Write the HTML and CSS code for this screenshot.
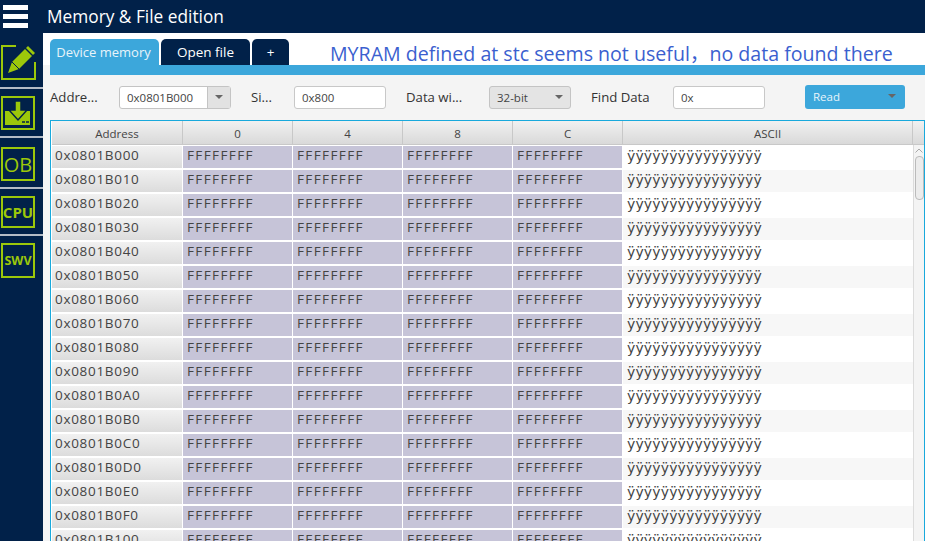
FILE: index.html
```html
<!DOCTYPE html>
<html lang="en">
<head>
    <meta charset="UTF-8">
    <title>Memory &amp; File edition</title>
    <link rel="stylesheet" href="styles.css">
</head>
<body>
    <header class="title-bar">
        <div class="menu-button"><span></span><span></span><span></span></div>
        <h1>Memory &amp; File edition</h1>
    </header>

    <div class="app">
        <nav class="sidebar">
            <div class="side-item item-edit">
                <svg class="side-icon" width="36" height="36" viewBox="0 0 36 36">
                    <path d="M15 1H1V34H34V17" fill="none" stroke="#9cc80a" stroke-width="2"/>
                    <path d="M7 28l4-11L24 4l7 7L18 24z" fill="#9cc80a"/>
                    <path d="M27 1l7 7-2 2-7-7z" fill="#9cc80a"/>
                    <path d="M11 17l7 7" stroke="#012149" stroke-width="1"/>
                </svg>
            </div>
            <div class="side-item item-load">
                <svg class="side-icon" width="34" height="34" viewBox="0 0 34 34">
                    <rect x="1" y="1" width="32" height="32" fill="none" stroke="#9cc80a" stroke-width="2"/>
                    <path d="M4 15h6l7 7 7-7h5v14H4z" fill="#9cc80a"/>
                    <path d="M14 5h6v9h6l-9 10-9-10h6z" fill="#9cc80a" stroke="#012149" stroke-width="1.500"/>
                    <path d="M21 26h3M25 26h3" stroke="#012149" stroke-width="1.500"/>
                </svg>
            </div>
            <div class="side-item item-ob"><div class="side-box ob">OB</div></div>
            <div class="side-item item-cpu"><div class="side-box bold">CPU</div></div>
            <div class="side-item item-swv"><div class="side-box bold small">SWV</div></div>
        </nav>

        <main class="content">
            <div class="tabs">
                <div class="tab active">Device memory</div>
                <div class="tab open">Open file</div>
                <div class="tab plus">+</div>
                <div class="note">MYRAM defined at stc seems not useful，no data found there</div>
            </div>
            <div class="tab-line"></div>

            <div class="toolbar">
                <label class="lbl lbl-addr">Addre...</label>
                <div class="combo">
                    <span class="combo-text">0x0801B000</span>
                    <span class="combo-arrow"><i class="arrow"></i></span>
                </div>
                <label class="lbl lbl-size">Si...</label>
                <div class="field field-size">0x800</div>
                <label class="lbl lbl-width">Data wi...</label>
                <div class="select">32-bit<i class="arrow"></i></div>
                <label class="lbl lbl-find">Find Data</label>
                <div class="field field-find">0x</div>
                <div class="read-button">Read<i class="arrow"></i></div>
            </div>

            <div class="table">
                <div class="head-row">
                    <div class="th">Address</div>
                    <div class="th">0</div>
                    <div class="th">4</div>
                    <div class="th">8</div>
                    <div class="th">C</div>
                    <div class="th">ASCII</div>
                    <div class="th"></div>
                </div>
                <div class="table-body">
                    <div class="rows">
                        <div class="row"><div class="addr">0x0801B000</div><div class="val">FFFFFFFF</div><div class="val">FFFFFFFF</div><div class="val">FFFFFFFF</div><div class="val">FFFFFFFF</div><div class="ascii">ÿÿÿÿÿÿÿÿÿÿÿÿÿÿÿÿ</div></div>
                        <div class="row"><div class="addr">0x0801B010</div><div class="val">FFFFFFFF</div><div class="val">FFFFFFFF</div><div class="val">FFFFFFFF</div><div class="val">FFFFFFFF</div><div class="ascii">ÿÿÿÿÿÿÿÿÿÿÿÿÿÿÿÿ</div></div>
                        <div class="row"><div class="addr">0x0801B020</div><div class="val">FFFFFFFF</div><div class="val">FFFFFFFF</div><div class="val">FFFFFFFF</div><div class="val">FFFFFFFF</div><div class="ascii">ÿÿÿÿÿÿÿÿÿÿÿÿÿÿÿÿ</div></div>
                        <div class="row"><div class="addr">0x0801B030</div><div class="val">FFFFFFFF</div><div class="val">FFFFFFFF</div><div class="val">FFFFFFFF</div><div class="val">FFFFFFFF</div><div class="ascii">ÿÿÿÿÿÿÿÿÿÿÿÿÿÿÿÿ</div></div>
                        <div class="row"><div class="addr">0x0801B040</div><div class="val">FFFFFFFF</div><div class="val">FFFFFFFF</div><div class="val">FFFFFFFF</div><div class="val">FFFFFFFF</div><div class="ascii">ÿÿÿÿÿÿÿÿÿÿÿÿÿÿÿÿ</div></div>
                        <div class="row"><div class="addr">0x0801B050</div><div class="val">FFFFFFFF</div><div class="val">FFFFFFFF</div><div class="val">FFFFFFFF</div><div class="val">FFFFFFFF</div><div class="ascii">ÿÿÿÿÿÿÿÿÿÿÿÿÿÿÿÿ</div></div>
                        <div class="row"><div class="addr">0x0801B060</div><div class="val">FFFFFFFF</div><div class="val">FFFFFFFF</div><div class="val">FFFFFFFF</div><div class="val">FFFFFFFF</div><div class="ascii">ÿÿÿÿÿÿÿÿÿÿÿÿÿÿÿÿ</div></div>
                        <div class="row"><div class="addr">0x0801B070</div><div class="val">FFFFFFFF</div><div class="val">FFFFFFFF</div><div class="val">FFFFFFFF</div><div class="val">FFFFFFFF</div><div class="ascii">ÿÿÿÿÿÿÿÿÿÿÿÿÿÿÿÿ</div></div>
                        <div class="row"><div class="addr">0x0801B080</div><div class="val">FFFFFFFF</div><div class="val">FFFFFFFF</div><div class="val">FFFFFFFF</div><div class="val">FFFFFFFF</div><div class="ascii">ÿÿÿÿÿÿÿÿÿÿÿÿÿÿÿÿ</div></div>
                        <div class="row"><div class="addr">0x0801B090</div><div class="val">FFFFFFFF</div><div class="val">FFFFFFFF</div><div class="val">FFFFFFFF</div><div class="val">FFFFFFFF</div><div class="ascii">ÿÿÿÿÿÿÿÿÿÿÿÿÿÿÿÿ</div></div>
                        <div class="row"><div class="addr">0x0801B0A0</div><div class="val">FFFFFFFF</div><div class="val">FFFFFFFF</div><div class="val">FFFFFFFF</div><div class="val">FFFFFFFF</div><div class="ascii">ÿÿÿÿÿÿÿÿÿÿÿÿÿÿÿÿ</div></div>
                        <div class="row"><div class="addr">0x0801B0B0</div><div class="val">FFFFFFFF</div><div class="val">FFFFFFFF</div><div class="val">FFFFFFFF</div><div class="val">FFFFFFFF</div><div class="ascii">ÿÿÿÿÿÿÿÿÿÿÿÿÿÿÿÿ</div></div>
                        <div class="row"><div class="addr">0x0801B0C0</div><div class="val">FFFFFFFF</div><div class="val">FFFFFFFF</div><div class="val">FFFFFFFF</div><div class="val">FFFFFFFF</div><div class="ascii">ÿÿÿÿÿÿÿÿÿÿÿÿÿÿÿÿ</div></div>
                        <div class="row"><div class="addr">0x0801B0D0</div><div class="val">FFFFFFFF</div><div class="val">FFFFFFFF</div><div class="val">FFFFFFFF</div><div class="val">FFFFFFFF</div><div class="ascii">ÿÿÿÿÿÿÿÿÿÿÿÿÿÿÿÿ</div></div>
                        <div class="row"><div class="addr">0x0801B0E0</div><div class="val">FFFFFFFF</div><div class="val">FFFFFFFF</div><div class="val">FFFFFFFF</div><div class="val">FFFFFFFF</div><div class="ascii">ÿÿÿÿÿÿÿÿÿÿÿÿÿÿÿÿ</div></div>
                        <div class="row"><div class="addr">0x0801B0F0</div><div class="val">FFFFFFFF</div><div class="val">FFFFFFFF</div><div class="val">FFFFFFFF</div><div class="val">FFFFFFFF</div><div class="ascii">ÿÿÿÿÿÿÿÿÿÿÿÿÿÿÿÿ</div></div>
                        <div class="row"><div class="addr">0x0801B100</div><div class="val">FFFFFFFF</div><div class="val">FFFFFFFF</div><div class="val">FFFFFFFF</div><div class="val">FFFFFFFF</div><div class="ascii">ÿÿÿÿÿÿÿÿÿÿÿÿÿÿÿÿ</div></div>
                    </div>
                    <div class="scrollbar">
                        <svg class="scroll-up" width="8" height="5" viewBox="0 0 8 5"><path d="M0.500 4.500L4 1l3.500 3.500" fill="none" stroke="#a8a8a8" stroke-width="1"/></svg>
                        <div class="thumb"></div>
                    </div>
                </div>
            </div>
        </main>
    </div>
</body>
</html>
```

FILE: styles.css
```css
html, body {
    height: 100%;
}

body {
    margin: 0;
    overflow: hidden;
    background-color: #012149;
    font-family: "Open Sans", "Noto Sans", sans-serif;
    color: #333;
}

.title-bar {
    display: flex;
    align-items: center;
    height: 33px;
    background-color: #012149;
}

.menu-button {
    display: flex;
    flex-direction: column;
    gap: 4px;
    width: 25px;
    margin: 0 0 0 3px;
}

.menu-button span {
    display: block;
    height: 5px;
    background-color: #fff;
}

.title-bar h1 {
    margin: 0 0 0 19px;
    font-size: 17.300px;
    font-weight: 400;
    color: #fff;
}

.app {
    display: flex;
    height: 508px;
}

/* left icon strip */
.sidebar {
    width: 43px;
    flex-shrink: 0;
}

.side-item {
    display: flex;
    align-items: flex-start;
    box-sizing: border-box;
    padding-left: 1px;
    border-bottom: 2px solid #b5bcc6;
}

.item-edit { height: 56px; padding-top: 12px; }
.item-load { height: 49px; padding-top: 7px; }
.item-ob { height: 51px; padding-top: 9px; }
.item-cpu { height: 47px; padding-top: 7px; }
.item-swv { height: 44px; padding-top: 7px; border-bottom: none; }

.side-box {
    display: flex;
    align-items: center;
    justify-content: center;
    width: 34px;
    height: 34px;
    box-sizing: border-box;
    border: 2px solid #9cc80a;
    color: #9cc80a;
}

.side-box.ob {
    font-size: 20px;
}

.side-box.bold {
    height: 32px;
    font-size: 15px;
    font-weight: 700;
}

.side-box.small {
    height: 35px;
    font-size: 12.500px;
}

/* main panel */
.content {
    flex: 1;
    min-width: 0;
    background-color: #f4f4f4;
    overflow: hidden;
}

.tabs {
    display: flex;
    align-items: flex-end;
    height: 32px;
    padding-left: 7px;
    background-color: #fff;
}

.tab {
    display: flex;
    align-items: center;
    justify-content: center;
    height: 26px;
    margin-right: 2px;
    box-sizing: border-box;
    border-radius: 5px 5px 0 0;
    background-color: #012149;
    color: #fff;
    font-size: 13.500px;
}

.tab.active {
    width: 109px;
    padding-right: 2px;
    background-color: #3ca7db;
    color: #e8f4fa;
    font-size: 13px;
}

.tab.open {
    width: 89px;
}

.tab.plus {
    width: 37px;
}

.note {
    align-self: center;
    margin: 6px 0 0 39px;
    font-family: "Open Sans", "Noto Sans CJK SC", sans-serif;
    font-size: 19.600px;
    color: #3b5fcf;
    white-space: nowrap;
}

.tab-line {
    height: 10px;
    margin-left: 7px;
    background-color: #3ca7db;
}

.toolbar {
    display: flex;
    align-items: center;
    height: 44px;
    padding-left: 7px;
    font-size: 13.200px;
}

.lbl {
    color: #333;
    white-space: nowrap;
}

.lbl-addr { width: 69px; }
.lbl-size { width: 43px; margin-left: 20px; }
.lbl-width { width: 83px; margin-left: 20px; }
.lbl-find { width: 82px; margin-left: 20px; }

.combo, .field, .select, .read-button {
    display: flex;
    align-items: center;
    box-sizing: border-box;
    height: 23px;
    font-size: 11.500px;
    color: #444;
}

.combo {
    width: 112px;
    background-color: #fff;
    border: 1px solid #c4c4c4;
    border-radius: 3px;
}

.combo-text {
    flex: 1;
    padding-left: 7px;
}

.combo-arrow {
    display: flex;
    align-items: center;
    justify-content: center;
    width: 22px;
    height: 100%;
    background-color: #e2e2e2;
    border-left: 1px solid #c4c4c4;
}

.arrow {
    display: block;
    width: 0;
    height: 0;
    border-left: 4px solid transparent;
    border-right: 4px solid transparent;
    border-top: 4px solid #666;
}

.field {
    background-color: #fff;
    border: 1px solid #c8c8c8;
    border-radius: 3px;
    padding-left: 7px;
}

.field-size { width: 92px; }
.field-find { width: 92px; }

.select {
    justify-content: space-between;
    width: 82px;
    padding: 0 7px;
    background-color: #e4e4e4;
    border: 1px solid #c4c4c4;
    border-radius: 3px;
}

.read-button {
    justify-content: space-between;
    width: 100px;
    height: 24px;
    margin-left: 40px;
    padding: 0 9px 2px 8px;
    background-color: #3ca7db;
    border-radius: 3px;
    color: #e8f4fa;
}

/* memory table */
.table {
    margin: 1px 0 0 7px;
    border: 1px solid #19a9dc;
    border-bottom: none;
    padding-left: 1px;
    background-color: #fff;
}

.head-row {
    display: flex;
    height: 23px;
    background: linear-gradient(#f1f1f1, #d9d9d9);
    border-bottom: 1px solid #c8c8c8;
}

.th {
    display: flex;
    flex-shrink: 0;
    align-items: center;
    justify-content: center;
    width: 110px;
    padding-top: 1px;
    border-right: 1px solid #c8c8c8;
    box-sizing: border-box;
    font-size: 11.500px;
    color: #444;
}

.th:first-child {
    width: 131px;
}

.th:nth-child(6) {
    width: 290px;
}

.th:last-child {
    width: 11px;
    border-right: none;
}

.table-body {
    display: flex;
}

.rows {
    flex-shrink: 0;
    width: 861px;
}

.row {
    display: flex;
    height: 24px;
}

.row:nth-child(even) .ascii {
    background-color: #f7f7f7;
}

.addr, .val, .ascii {
    display: flex;
    align-items: center;
    box-sizing: border-box;
    height: 22px;
    margin: 1px 0;
    padding-bottom: 4px;
    font-size: 13.500px;
    letter-spacing: 1.400px;
    color: #444;
}

.addr {
    width: 130px;
    margin-right: 1px;
    padding-left: 3px;
    background: linear-gradient(#f1f1f1, #dcdcdc);
    font-size: 13.500px;
    letter-spacing: 0.700px;
}

.val {
    width: 109px;
    margin-right: 1px;
    padding-left: 4px;
    background-color: #c6c4d8;
}

.ascii {
    width: 290px;
    padding-left: 4px;
    padding-bottom: 2px;
    font-family: "DejaVu Sans", sans-serif;
    font-size: 14px;
    letter-spacing: 0.150px;
}

.scrollbar {
    flex-shrink: 0;
    width: 11px;
    background-color: #f4f4f4;
    border-left: 1px solid #dcdcdc;
    box-sizing: border-box;
}

.scroll-up {
    display: block;
    margin: 3px auto 0;
}

.thumb {
    width: 9px;
    height: 44px;
    margin: 3px auto 0;
    box-sizing: border-box;
    background-color: #ececec;
    border: 1px solid #bbb;
    border-radius: 4px;
}
```
